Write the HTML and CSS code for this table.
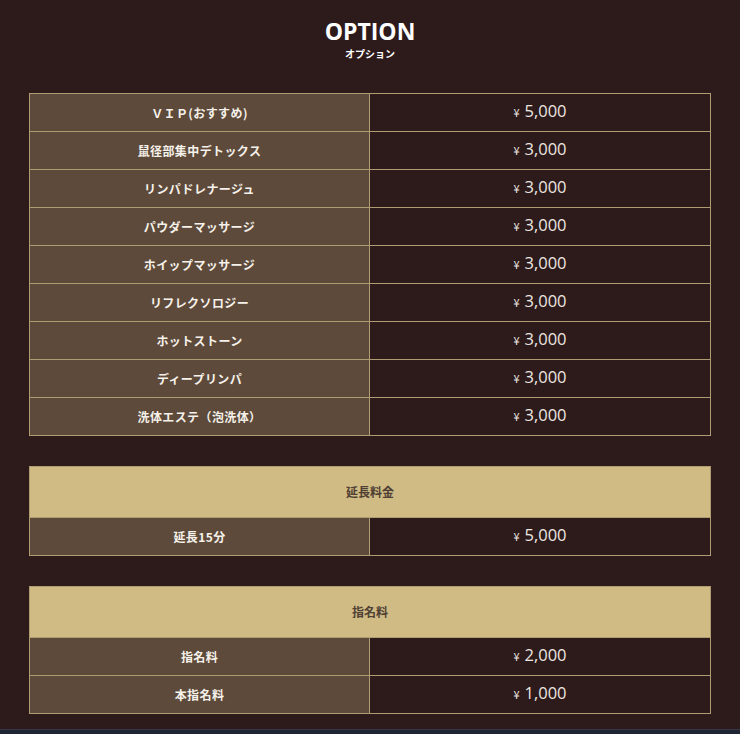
FILE: index.html
```html
<!DOCTYPE html>
<html lang="ja">
<head>
<meta charset="utf-8">
<title>OPTION</title>
<link rel="stylesheet" href="styles.css">
</head>
<body>
<main class="page">
  <header class="heading">
    <h1 class="title">OPTION</h1>
    <p class="subtitle">オプション</p>
  </header>

  <section class="price-table">
    <div class="label">ＶＩＰ(おすすめ)</div><div class="price"><span class="yen">¥</span> 5,000</div>
    <div class="label">鼠径部集中デトックス</div><div class="price"><span class="yen">¥</span> 3,000</div>
    <div class="label">リンパドレナージュ</div><div class="price"><span class="yen">¥</span> 3,000</div>
    <div class="label">パウダーマッサージ</div><div class="price"><span class="yen">¥</span> 3,000</div>
    <div class="label">ホイップマッサージ</div><div class="price"><span class="yen">¥</span> 3,000</div>
    <div class="label">リフレクソロジー</div><div class="price"><span class="yen">¥</span> 3,000</div>
    <div class="label">ホットストーン</div><div class="price"><span class="yen">¥</span> 3,000</div>
    <div class="label">ディープリンパ</div><div class="price"><span class="yen">¥</span> 3,000</div>
    <div class="label">洗体エステ（泡洗体）</div><div class="price"><span class="yen">¥</span> 3,000</div>
  </section>

  <section class="price-table">
    <div class="group">延長料金</div>
    <div class="label">延長15分</div><div class="price"><span class="yen">¥</span> 5,000</div>
  </section>

  <section class="price-table">
    <div class="group">指名料</div>
    <div class="label">指名料</div><div class="price"><span class="yen">¥</span> 2,000</div>
    <div class="label">本指名料</div><div class="price"><span class="yen">¥</span> 1,000</div>
  </section>
</main>
<div class="next-strip"></div>
</body>
</html>
```

FILE: styles.css
```css
html, body {
  margin: 0;
  padding: 0;
  background: #2d1a1b;
}
body {
  font-family: "Noto Sans CJK JP", "Noto Sans", sans-serif;
  color: #f1ece4;
  height: 734px;
  overflow: hidden;
  display: flex;
  flex-direction: column;
}
.page {
  flex: 1;
  padding: 0 29px;
  display: flex;
  flex-direction: column;
  gap: 30px;
}
.heading {
  text-align: center;
  padding-top: 17px;
  margin-bottom: 2px;
}
.title {
  margin: 0;
  font-family: "Open Sans", "Noto Sans", sans-serif;
  font-weight: 700;
  font-size: 23px;
  line-height: 28px;
  color: #ffffff;
}
.subtitle {
  margin: 2px 0 0;
  font-size: 10px;
  line-height: 14px;
  font-weight: 700;
  color: #ffffff;
}
.price-table {
  display: grid;
  grid-template-columns: 339px 1fr;
  gap: 1px;
  padding: 1px;
  background: #b09c72;
}
.label,
.price,
.group {
  display: flex;
  align-items: center;
  justify-content: center;
  height: 37px;
  line-height: 1;
}
.label {
  background: #5d4a3a;
  font-size: 12px;
  font-weight: 700;
  color: #f6f1ea;
  letter-spacing: 0.4px;
}
.price {
  background: #2d1a1b;
  font-family: "Open Sans", "Noto Sans", sans-serif;
  font-size: 16.5px;
  color: #ece7e0;
  padding-bottom: 2px;
  box-sizing: border-box;
}
.yen {
  font-size: 11px;
  font-family: "Noto Sans CJK JP", sans-serif;
  margin-right: 5px;
  margin-top: 2px;
}
.group {
  grid-column: 1 / -1;
  background: #d0bb84;
  color: #4f4033;
  font-size: 12px;
  font-weight: 700;
  height: 50px;
}
.next-strip {
  height: 4px;
  background: #1f2433;
  border-top: 1px solid #34384a;
}
```
